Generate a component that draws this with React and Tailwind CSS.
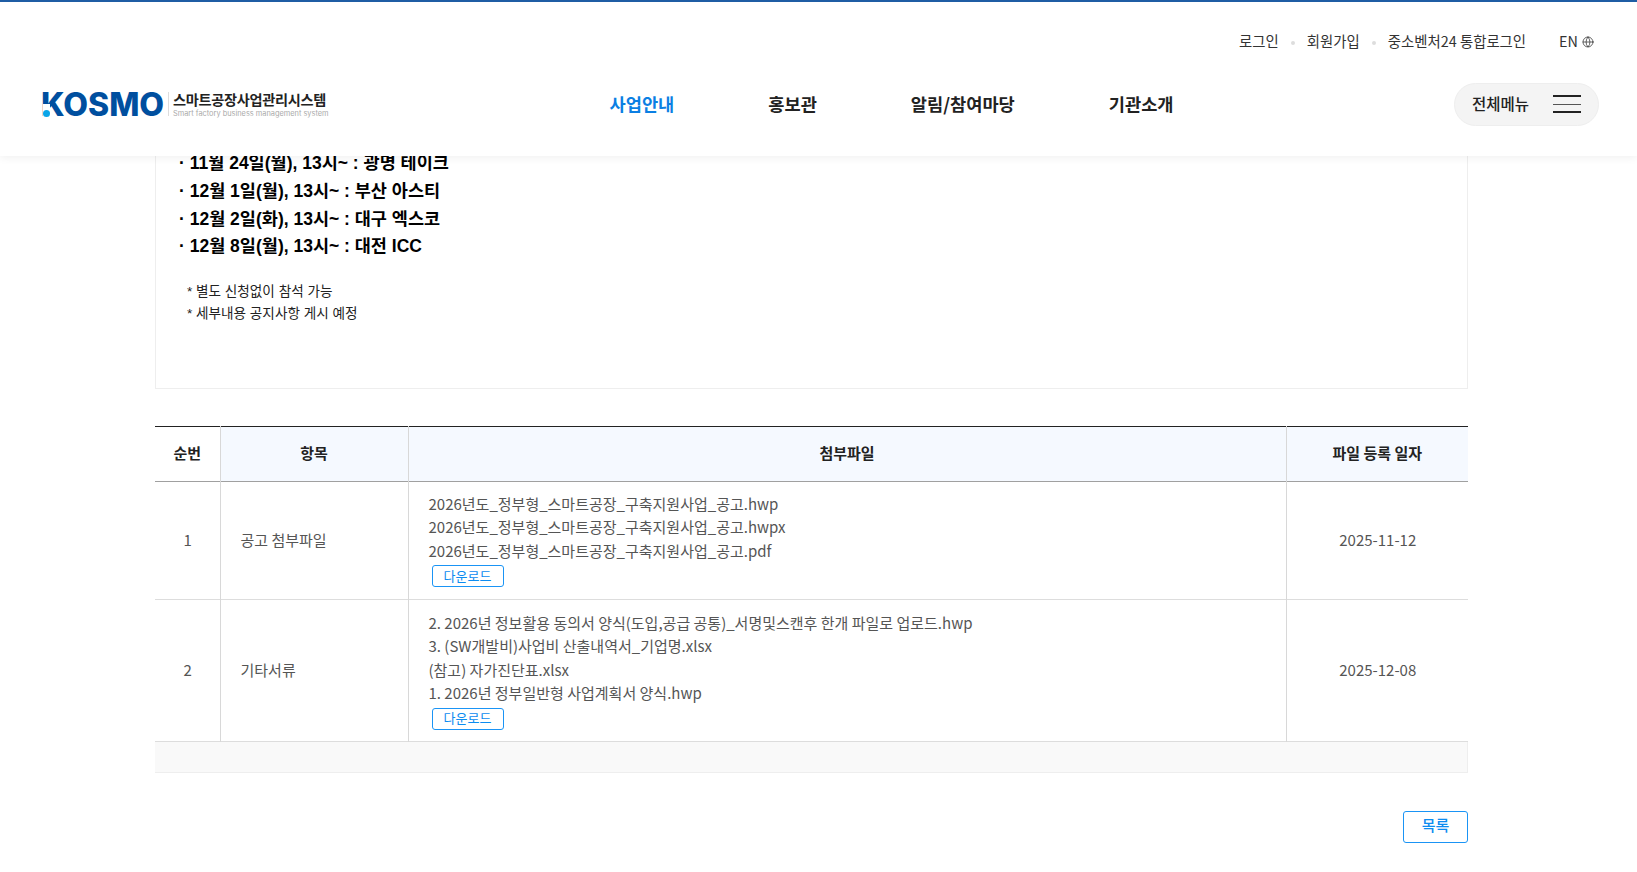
import React from "react";
import { Globe } from "lucide-react";

const kr = "font-['Noto_Sans_CJK_KR','Noto_Sans',sans-serif]";

function Logo() {
  return (
    <div className="flex items-center">
      <div className="relative h-[26px] w-[121px]">
        <span className="absolute left-[-2px] top-[-8px] font-['Inter',sans-serif] text-[32px] font-extrabold leading-[44px] text-[#004f9f]">
          KOSMO
        </span>
        <span className="absolute left-0 top-[13px] h-[14px] w-[7px] bg-white" />
        <span className="absolute left-0 top-[19px] h-[7px] w-[7px] rounded-full bg-[#0aa5e8]" />
      </div>
      <span className="ml-[4px] mr-[4px] h-[24px] w-px bg-[#ddd]" />
      <div className="flex flex-col">
        <span className="text-[14.2px] font-bold leading-[16px] tracking-[-0.3px] text-[#222]">스마트공장사업관리시스템</span>
        <span className="mt-[2px] whitespace-nowrap font-['Inter',sans-serif] text-[7.4px] leading-[9px] text-[#aaa]">Smart factory business management system</span>
      </div>
    </div>
  );
}

function Dot() {
  return <span className="mx-[12px] mt-[3px] h-[4px] w-[4px] rounded-full bg-[#ddd]" />;
}

function DownloadBtn() {
  return (
    <span className="ml-[3px] mt-[3px] flex h-[22px] w-[72px] items-center justify-center rounded-[3px] border border-[#1a94f5] pb-[2px] text-[13px] leading-none text-[#0d8cf0]">
      다운로드
    </span>
  );
}

const th = "border-r border-[#d8d8d8] bg-[#f5f9ff] pb-[2px] text-center text-[15px] font-bold text-[#222]";
const td = "border-r border-[#d8d8d8] text-[15px] text-[#555]";

function Row({ no, title, files, date, h, pt }) {
  return (
    <tr className={`border-b border-[#ddd] ${h}`}>
      <td className={`${td} pl-[1px] text-center`}>{no}</td>
      <td className={`${td} pl-[20px]`}>{title}</td>
      <td className={`${td} pl-[20px] align-top ${pt}`}>
        {files.map((f) => (
          <div key={f} className="h-[23.4px] leading-[23.4px] whitespace-nowrap">{f}</div>
        ))}
        <DownloadBtn />
      </td>
      <td className="pl-[1px] text-center text-[15px] text-[#555]">{date}</td>
    </tr>
  );
}

export default function App() {
  return (
    <div className={`h-[872px] w-full overflow-hidden bg-white ${kr}`}>
      <header className="relative z-10 h-[156px] border-t-2 border-[#1f5da4] bg-white shadow-[0_2px_8px_rgba(0,0,0,0.06)]">
        <div className="flex h-[78px] items-center justify-end pr-[43px] text-[14.4px] text-[#333]">
          <span>로그인</span>
          <Dot />
          <span>회원가입</span>
          <Dot />
          <span>중소벤처24 통합로그인</span>
          <span className="ml-[33px]">EN</span>
          <Globe size={12} strokeWidth={1.5} className="ml-[4px] mt-[2px] text-[#333]" />
        </div>
        <div className="relative mt-[2px] flex h-[44px] items-center pl-[43px] pr-[38px]">
          <Logo />
          <nav className="ml-[281px] flex items-center gap-[94px] text-[17.6px] font-semibold text-[#222]">
            <span className="text-[#0b7fe3]">사업안내</span>
            <span>홍보관</span>
            <span>알림/참여마당</span>
            <span>기관소개</span>
          </nav>
          <div className="ml-auto flex h-[43px] w-[145px] items-center rounded-full border border-[#eee] bg-[#f4f4f4] pl-[17px]">
            <span className="text-[15.5px] font-medium text-[#222]">전체메뉴</span>
            <span className="ml-[24px] flex h-[18px] w-[28px] flex-col justify-between">
              <span className="h-[2px] bg-[#222]" />
              <span className="h-px bg-[#555]" />
              <span className="h-[2px] bg-[#222]" />
            </span>
          </div>
        </div>
      </header>

      <main className="ml-[155px] w-[1313px]">
        <section className="flow-root h-[233px] border-x border-b border-[#eee] pl-[23px] font-['Liberation_Sans','Noto_Sans_CJK_KR',sans-serif] text-black">
          <div className="-mt-[6px] text-[17.5px] font-bold leading-[27.8px]">
            <p>· 11월 24일(월), 13시~ : 광명 테이크</p>
            <p>· 12월 1일(월), 13시~ : 부산 아스티</p>
            <p>· 12월 2일(화), 13시~ : 대구 엑스코</p>
            <p>· 12월 8일(월), 13시~ : 대전 ICC</p>
          </div>
          <div className="ml-[8px] mt-[20px] text-[13.6px] leading-[22px] text-[#222]">
            <p>* 별도 신청없이 참석 가능</p>
            <p>* 세부내용 공지사항 게시 예정</p>
          </div>
        </section>

        <table className="mt-[37px] w-full table-fixed border-collapse border-t border-[#222]">
          <colgroup>
            <col className="w-[65px]" />
            <col className="w-[188px]" />
            <col className="w-[878px]" />
            <col />
          </colgroup>
          <thead>
            <tr className="h-[55px] border-b border-[#a0a0a0]">
              <th className={`${th} !bg-white`}>순번</th>
              <th className={th}>항목</th>
              <th className={th}>첨부파일</th>
              <th className="bg-[#f5f9ff] pb-[2px] text-center text-[15px] font-bold text-[#222]">파일 등록 일자</th>
            </tr>
          </thead>
          <tbody>
            <Row
              no="1"
              title="공고 첨부파일"
              h="h-[118px]"
              pt="pt-[10px]"
              date="2025-11-12"
              files={[
                "2026년도_정부형_스마트공장_구축지원사업_공고.hwp",
                "2026년도_정부형_스마트공장_구축지원사업_공고.hwpx",
                "2026년도_정부형_스마트공장_구축지원사업_공고.pdf",
              ]}
            />
            <Row
              no="2"
              title="기타서류"
              h="h-[142px]"
              pt="pt-[11px]"
              date="2025-12-08"
              files={[
                "2. 2026년 정보활용 동의서 양식(도입,공급 공통)_서명및스캔후 한개 파일로 업로드.hwp",
                "3. (SW개발비)사업비 산출내역서_기업명.xlsx",
                "(참고) 자가진단표.xlsx",
                "1. 2026년 정부일반형 사업계획서 양식.hwp",
              ]}
            />
          </tbody>
        </table>
        <div className="h-[31px] border-b border-r border-[#eee] bg-[#f9f9f9]" />
        <div className="mt-[38px] flex justify-end">
          <span className="flex h-[32px] w-[65px] items-center justify-center rounded-[3px] border border-[#1a94f5] pb-[3px] text-[15px] font-medium text-[#0d8cf0]">
            목록
          </span>
        </div>
      </main>
    </div>
  );
}
